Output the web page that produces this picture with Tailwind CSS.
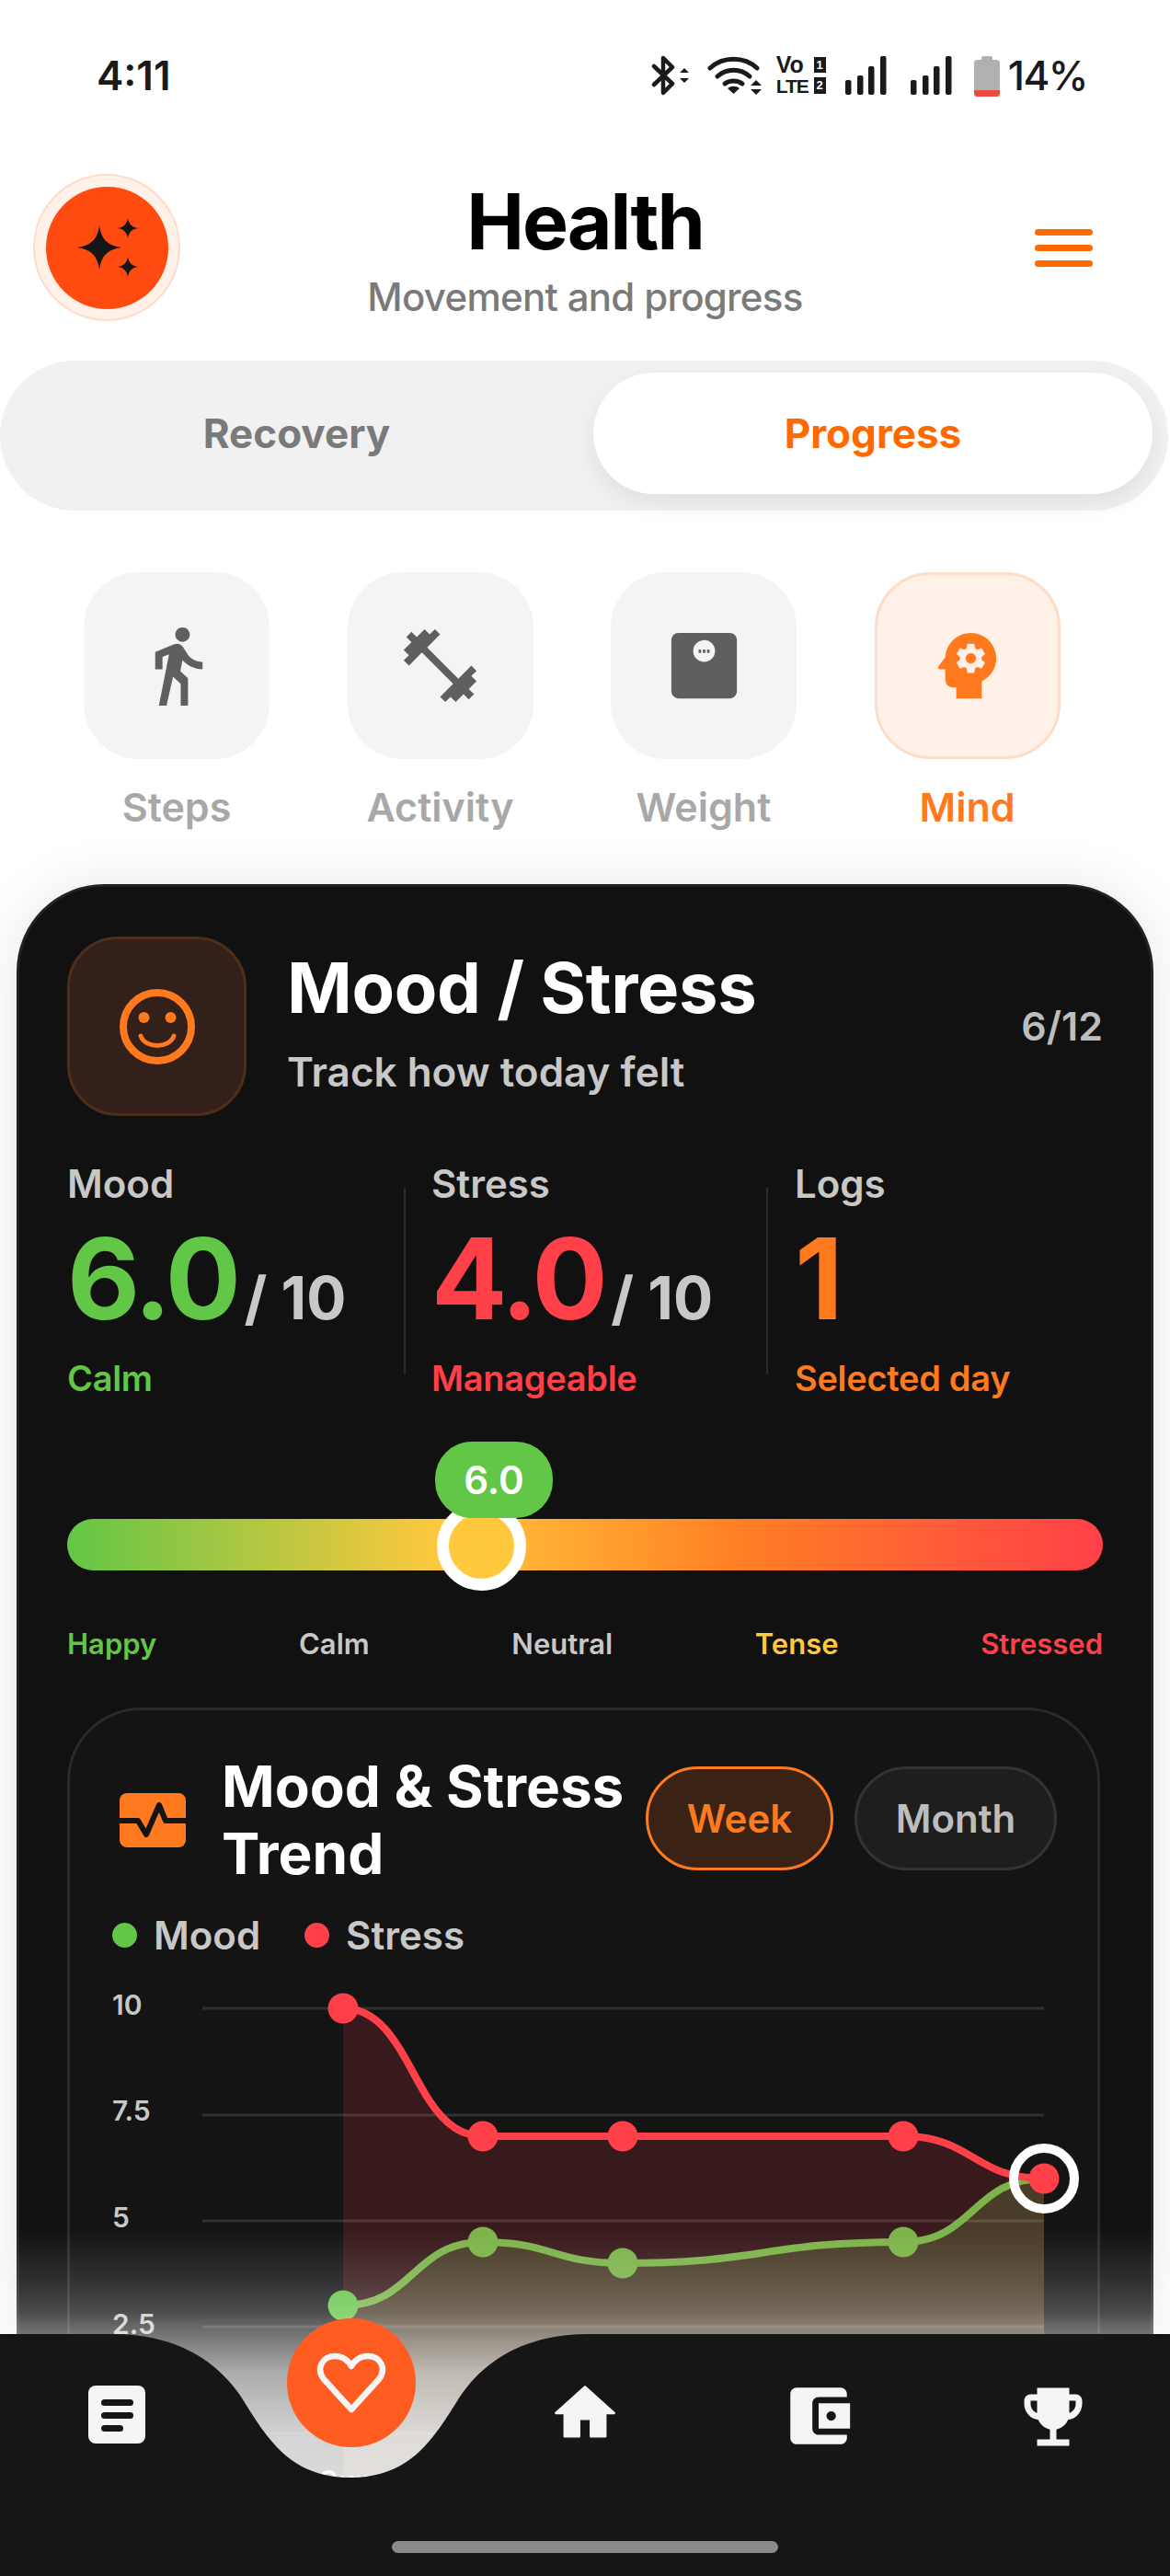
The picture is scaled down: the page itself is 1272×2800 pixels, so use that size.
<!DOCTYPE html>
<html lang="en">
<head>
  <meta charset="UTF-8" />
  <meta name="viewport" content="width=device-width, initial-scale=1.0" />
  <title>Health</title>
  <script src="https://cdn.jsdelivr.net/npm/@tailwindcss/browser@4"></script>
</head>
<body class="bg-white">
  <div class="relative w-[1272px] h-[2800px] overflow-hidden font-['Inter',sans-serif] bg-white">

    <!-- status bar -->
    <div class="flex items-center justify-between h-[90px] mt-[37px] pl-[105px] pr-[90px] text-[#1a1a1a]">
      <span class="text-[44px] font-semibold leading-none">4:11</span>
      <div class="flex items-center">
        <svg width="42" height="44" viewBox="0 0 42 44" fill="none" stroke="#1a1a1a" stroke-width="4.5" stroke-linejoin="round" stroke-linecap="round">
          <path d="M3 12 23 31 13 41V3l10 10L3 32" />
          <path d="M31 19h10l-5-5zM31 25h10l-5 5z" fill="#1a1a1a" stroke="none" />
        </svg>
        <svg class="ml-[19px]" width="60" height="44" viewBox="0 0 60 44" fill="none" stroke="#1a1a1a" stroke-width="5" stroke-linecap="round">
          <path d="M3 14C17 1 40 1 54 14" />
          <path d="M11 23C21 14 36 14 46 23" />
          <path d="M19 31C24 27 33 27 38 31" />
          <path d="M22 36c4-3 9-3 13 0l-6.500 6z" fill="#1a1a1a" stroke="none" />
          <path d="M47 33h12l-6-6zM47 37h12l-6 6z" fill="#1a1a1a" stroke="none" />
        </svg>
        <div class="ml-[15px] w-[54px] h-[42px] font-['Liberation_Sans',sans-serif] font-bold text-[#1a1a1a]">
          <div class="flex justify-between items-center h-[18px]">
            <span class="text-[25px] leading-none">Vo</span>
            <span class="w-[13px] h-[17px] bg-[#1a1a1a] text-white text-[13px] leading-[17px] text-center">1</span>
          </div>
          <div class="flex justify-between items-center h-[18px] mt-[5px]">
            <span class="text-[21px] leading-none tracking-[-1px]">LTE</span>
            <span class="w-[13px] h-[18px] bg-[#1a1a1a] text-white text-[13px] leading-[18px] text-center">2</span>
          </div>
        </div>
        <svg class="ml-[21px]" width="45" height="42" viewBox="0 0 45 42" fill="#1a1a1a">
          <rect x="0" y="26" width="6.500" height="16" rx="2" />
          <rect x="13" y="21" width="6.500" height="21" rx="2" />
          <rect x="25" y="11" width="6.500" height="31" rx="2" />
          <rect x="38" y="0" width="6.500" height="42" rx="2" />
        </svg>
        <svg class="ml-[26px]" width="45" height="42" viewBox="0 0 45 42" fill="#1a1a1a">
          <rect x="0" y="26" width="6.500" height="16" rx="2" />
          <rect x="13" y="21" width="6.500" height="21" rx="2" />
          <rect x="25" y="11" width="6.500" height="31" rx="2" />
          <rect x="38" y="0" width="6.500" height="42" rx="2" />
        </svg>
        <svg class="ml-[24px]" width="28" height="45" viewBox="0 0 28 45">
          <path d="M8 5V3a2 2 0 0 1 2-2h8a2 2 0 0 1 2 2v2h4a4 4 0 0 1 4 4v32a4 4 0 0 1-4 4H4a4 4 0 0 1-4-4V9a4 4 0 0 1 4-4z" fill="#b0b0b0" />
          <path d="M0 38h28v3a4 4 0 0 1-4 4H4a4 4 0 0 1-4-4z" fill="#e84b3c" />
        </svg>
        <span class="ml-[9px] text-[44px] font-medium leading-none tracking-[-1.500px]">14%</span>
      </div>
    </div>

    <!-- header -->
    <div class="grid grid-cols-[160px_1fr_160px] items-center px-[36px] mt-[62px] h-[160px]">
      <div class="w-[160px] h-[160px] rounded-full bg-[#fff0e8] border-[2px] border-[#fddcc8] flex items-center justify-center">
        <div class="w-[133px] h-[133px] rounded-full bg-[#ff4a10] flex items-center justify-center">
          <svg width="80" height="80" viewBox="0 0 80 80" fill="#161616">
            <path d="M32 16C34 31 41 38 56 40 41 42 34 49 32 64 30 49 23 42 8 40 23 38 30 31 32 16z" />
            <path d="M63 8C64 14 67 18 74 19 67 20 64 24 63 30 62 24 59 20 52 19 59 18 62 14 63 8z" />
            <path d="M63 50C64 56 67 60 74 61 67 62 64 66 63 72 62 66 59 62 52 61 59 60 62 56 63 50z" />
          </svg>
        </div>
      </div>
      <div class="text-center mt-[5px]">
        <h1 class="text-[84px] font-bold leading-[90px] tracking-[-2px] text-black">Health</h1>
        <p class="text-[42px] font-medium leading-[50px] tracking-[-0.7px] text-[#7a7a7a] mt-[12px]">Movement and progress</p>
      </div>
      <div class="flex flex-col gap-[10px] w-[63px] justify-self-center">
        <span class="h-[7px] rounded-full bg-[#ff6a00]"></span>
        <span class="h-[7px] rounded-full bg-[#ff6a00]"></span>
        <span class="h-[7px] rounded-full bg-[#ff6a00]"></span>
      </div>
    </div>

    <!-- tabs -->
    <div class="flex items-start w-[1270px] h-[163px] mt-[43px] pt-[13px] rounded-full bg-[#f1f1f1]">
      <div class="flex-1 h-[132px] flex items-center justify-center text-[44px] font-bold text-[#7a7a7a]">Recovery</div>
      <div class="w-[608px] h-[132px] mr-[17px] rounded-full bg-white flex items-center justify-center text-[44px] font-bold text-[#ff6a00] shadow-[0_10px_26px_rgba(0,0,0,0.07)]">Progress</div>
    </div>

    <!-- categories -->
    <div class="flex gap-[84.500px] ml-[91px] mt-[67px]">
      <div class="w-[202px] flex flex-col items-center">
        <div class="w-[202px] h-[203px] rounded-[60px] bg-[#f4f4f4] flex items-center justify-center">
          <svg width="95" height="95" viewBox="0 0 24 24" fill="#5f5f5f"><path d="M13.5 5.500c1.100 0 2-.9 2-2s-.9-2-2-2-2 .9-2 2 .9 2 2 2zM9.800 8.900L7 23h2.100l1.800-8 2.100 2v6h2v-7.500l-2.100-2 .6-3C14.800 12 16.800 13 19 13v-2c-1.900 0-3.500-1-4.300-2.400l-1-1.600c-.4-.6-1-1-1.700-1-.3 0-.5.1-.8.1L6 8.300V13h2V9.600l1.800-.7" /></svg>
        </div>
        <span class="mt-[30px] text-[43px] leading-[44px] font-semibold text-[#a8a8a8]">Steps</span>
      </div>
      <div class="w-[202px] flex flex-col items-center">
        <div class="w-[202px] h-[203px] rounded-[60px] bg-[#f4f4f4] flex items-center justify-center">
          <svg width="95" height="95" viewBox="0 0 24 24" fill="#5f5f5f"><path d="M20.570 14.860L22 13.430 20.570 12 17 15.570 8.430 7 12 3.430 10.570 2 9.140 3.430 7.710 2 5.570 4.140 4.140 2.710 2.710 4.140l1.430 1.430L2 7.710l1.430 1.430L2 10.570 3.430 12 7 8.430 15.570 17 12 20.570 13.430 22l1.430-1.430L16.290 22l2.140-2.140 1.430 1.430 1.430-1.430-1.430-1.430L22 16.290z" /></svg>
        </div>
        <span class="mt-[30px] text-[43px] leading-[44px] font-semibold text-[#a8a8a8]">Activity</span>
      </div>
      <div class="w-[202px] flex flex-col items-center">
        <div class="w-[202px] h-[203px] rounded-[60px] bg-[#f4f4f4] flex items-center justify-center">
          <svg width="95" height="95" viewBox="0 0 24 24" fill="#5f5f5f">
            <path d="M19 3H5c-1.100 0-2 .9-2 2v14c0 1.100.9 2 2 2h14c1.100 0 2-.9 2-2V5c0-1.100-.9-2-2-2z" />
            <circle cx="12" cy="8" r="3" fill="#f4f4f4" />
            <rect x="10.500" y="7.600" width="0.700" height="0.900" /><rect x="11.650" y="7.600" width="0.700" height="0.900" /><rect x="12.800" y="7.600" width="0.700" height="0.900" />
          </svg>
        </div>
        <span class="mt-[30px] text-[43px] leading-[44px] font-semibold text-[#a8a8a8]">Weight</span>
      </div>
      <div class="w-[202px] flex flex-col items-center">
        <div class="w-[202px] h-[203px] rounded-[60px] bg-[#fff0e8] border-[3px] border-[#fddcc8] flex items-center justify-center">
          <svg width="95" height="95" viewBox="0 0 24 24" fill="#ff7a1f"><path d="M13 8.570c-.79 0-1.430.64-1.430 1.430s.64 1.430 1.430 1.430 1.430-.64 1.430-1.430-.64-1.430-1.430-1.430z" /><path d="M13 3C9.250 3 6.200 5.940 6.020 9.640L4.100 12.200c-.25.33 0 .8.4.8H6v3c0 1.100.9 2 2 2h1v3h7v-4.680c2.360-1.120 4-3.530 4-6.320 0-3.870-3.130-7-7-7zm3 7c0 .13-.01.26-.03.39l.83.66c.08.06.1.16.05.25l-.8 1.390c-.05.09-.16.12-.24.09l-.99-.4c-.21.16-.43.29-.67.39L14 13.830c-.01.1-.1.17-.2.17h-1.600c-.1 0-.18-.07-.2-.17l-.15-1.060c-.25-.1-.47-.23-.68-.39l-.99.4c-.09.03-.2 0-.25-.09l-.8-1.390c-.05-.08-.03-.19.05-.25l.84-.66c-.03-.13-.02-.26-.02-.39 0-.13.02-.27.04-.39l-.85-.66c-.08-.06-.1-.16-.05-.26l.8-1.380c.05-.09.15-.12.24-.09l1 .4c.2-.15.43-.29.67-.39L12 6.170c.02-.1.1-.17.2-.17h1.600c.1 0 .18.07.2.17l.15 1.060c.24.1.46.23.67.39l1-.4c.09-.03.2 0 .24.09l.8 1.380c.05.09.03.2-.05.26l-.85.66c.03.12.04.25.04.39z" /></svg>
        </div>
        <span class="mt-[30px] text-[43px] leading-[44px] font-semibold text-[#ff7a1f]">Mind</span>
      </div>
    </div>

    <!-- dark card -->
    <div class="ml-[18px] mt-[62px] w-[1236px] h-[1900px] rounded-t-[95px] bg-[#111111] border-[3px] border-[#222222] pt-[54px] px-[52px] shadow-[0_0_60px_rgba(0,0,0,0.1)]">
      <div class="flex h-[195px]">
        <div class="w-[195px] h-[195px] rounded-[55px] bg-[#33201a] border-[3px] border-[#4e2e18] flex items-center justify-center">
          <svg width="88" height="88" viewBox="0 0 88 88" fill="none" stroke="#ff7a1f" stroke-width="8" stroke-linecap="round">
            <circle cx="44" cy="44" r="37" />
            <path d="M26 54C31 68 57 68 62 54" stroke-width="5" />
            <circle cx="29.500" cy="34" r="6" fill="#ff7a1f" stroke="none" />
            <circle cx="58.500" cy="34" r="6" fill="#ff7a1f" stroke="none" />
          </svg>
        </div>
        <div class="ml-[44px] flex-1 pt-[9px]">
          <h2 class="text-[76px] font-bold leading-[92px] tracking-[-0.3px] text-white">Mood / Stress</h2>
          <p class="mt-[21px] text-[44px] font-semibold leading-[50px] text-[#c8c8c8]">Track how today felt</p>
        </div>
        <span class="self-center text-[43px] font-semibold text-[#bdbdbd]">6/12</span>
      </div>

      <!-- stats -->
      <div class="flex mt-[52px]">
        <div class="w-[366px]">
          <div class="text-[42px] font-semibold leading-[44px] text-[#c8c8c8]">Mood</div>
          <div class="mt-[16px] h-[130px] leading-[130px] whitespace-nowrap">
            <span class="text-[122px] font-bold tracking-[-3px] text-[#62c646]">6.0</span>
            <span class="text-[64px] font-bold text-[#c8c8c8] ml-[2px]">/ 10</span>
          </div>
          <div class="mt-[21px] text-[38px] font-semibold leading-[44px] tracking-[-0.3px] text-[#62c646]">Calm</div>
        </div>
        <span class="w-[2px] h-[203px] self-center bg-[#2a2a2a] mr-[28px]"></span>
        <div class="w-[364px]">
          <div class="text-[42px] font-semibold leading-[44px] text-[#c8c8c8]">Stress</div>
          <div class="mt-[16px] h-[130px] leading-[130px] whitespace-nowrap">
            <span class="text-[122px] font-bold tracking-[-3px] text-[#ff4048]">4.0</span>
            <span class="text-[64px] font-bold text-[#c8c8c8] ml-[2px]">/ 10</span>
          </div>
          <div class="mt-[21px] text-[38px] font-semibold leading-[44px] tracking-[-0.3px] text-[#ff4048]">Manageable</div>
        </div>
        <span class="w-[2px] h-[203px] self-center bg-[#2a2a2a] mr-[29px]"></span>
        <div>
          <div class="text-[42px] font-semibold leading-[44px] text-[#c8c8c8]">Logs</div>
          <div class="mt-[16px] h-[130px] leading-[130px] text-[122px] font-bold text-[#ff7a1f]">1</div>
          <div class="mt-[21px] text-[38px] font-semibold leading-[44px] tracking-[-0.3px] text-[#ff7a1f]">Selected day</div>
        </div>
      </div>

      <!-- gauge -->
      <div class="relative h-[56px] mt-[131px] rounded-full bg-[linear-gradient(90deg,#62c646_0%,#ffc83d_36%,#ff7f24_65%,#ff4048_100%)]">
        <div class="absolute left-[402px] top-[-19px] w-[97px] h-[97px] rounded-full bg-[#ffc83d] border-[13px] border-white"></div>
        <div class="absolute left-[400px] top-[-84px] w-[128px] h-[83px] rounded-[40px] bg-[#62c646] flex items-center justify-center text-[42px] font-semibold text-white">6.0</div>
      </div>
      <div class="flex justify-between mt-[60px] text-[31px] leading-[40px] font-semibold">
        <span class="text-[#62c646]">Happy</span>
        <span class="text-[#c8c8c8]">Calm</span>
        <span class="text-[#c8c8c8]">Neutral</span>
        <span class="text-[#ffc83d]">Tense</span>
        <span class="text-[#ff4048]">Stressed</span>
      </div>

      <!-- trend -->
      <div class="mt-[49px] w-[1123px] h-[1000px] rounded-t-[80px] bg-[#141414] border-[3px] border-[#2a2a2a] pt-[46px]">
        <div class="flex items-start pl-[54px]">
          <svg class="self-center shrink-0" width="72" height="59" viewBox="0 0 72 59">
            <rect width="72" height="59" rx="8" fill="#ff7a1f" />
            <path d="M0 30H20L29 45 43 13 50 30H72" fill="none" stroke="#141414" stroke-width="6" stroke-linejoin="round" />
          </svg>
          <h3 class="ml-[39px] w-[461px] shrink-0 text-[62px] font-bold leading-[73px] text-white">Mood &amp; Stress Trend</h3>
          <div class="flex gap-[23px] mt-[15px]">
            <span class="w-[204px] h-[113px] rounded-full bg-[#3a2315] border-[3px] border-[#ff7a1f] flex items-center justify-center text-[42px] font-semibold text-[#ff7a1f]">Week</span>
            <span class="w-[220px] h-[113px] rounded-full bg-[#1e1e1e] border-[3px] border-[#333333] flex items-center justify-center text-[42px] font-semibold text-[#bdbdbd]">Month</span>
          </div>
        </div>
        <div class="flex items-center pl-[46px] mt-[30px] h-[44px] text-[42px] font-semibold text-[#c8c8c8]">
          <span class="w-[27px] h-[27px] rounded-full bg-[#62c646]"></span>
          <span class="ml-[18px]">Mood</span>
          <span class="ml-[48px] w-[27px] h-[27px] rounded-full bg-[#ff4048]"></span>
          <span class="ml-[18px]">Stress</span>
        </div>
        <svg class="block mt-[25px]" width="1117" height="650" viewBox="76 2150 1117 650">
          <path d="M373 2183C449 2183 449 2322 525 2322H982C1058 2322 1058 2368 1135 2368V2800H373Z" fill="#ff4048" fill-opacity="0.16" />
          <path d="M373 2506C449 2506 449 2437 525 2437 601 2437 601 2460 677 2460 830 2460 830 2437 982 2437 1058 2437 1058 2368 1135 2368V2800H373Z" fill="#8cc85a" fill-opacity="0.2" />
          <g fill="none" stroke="#ffffff" stroke-opacity="0.12" stroke-width="3">
            <path d="M220 2183H1135" /><path d="M220 2299H1135" /><path d="M220 2414H1135" /><path d="M220 2529H1135" /><path d="M220 2645H1135" />
          </g>
          <g font-size="30" font-weight="600" fill="#c8c8c8">
            <text x="122" y="2190">10</text><text x="122" y="2305">7.5</text><text x="122" y="2421">5</text><text x="122" y="2537">2.5</text>
          </g>
          <text x="347" y="2708" font-size="31" font-weight="600" fill="#e8e8e8">Sun</text>
          <path d="M373 2506C449 2506 449 2437 525 2437 601 2437 601 2460 677 2460 830 2460 830 2437 982 2437 1058 2437 1058 2368 1135 2368" fill="none" stroke="#7cb34a" stroke-width="8" />
          <path d="M373 2183C449 2183 449 2322 525 2322H982C1058 2322 1058 2368 1135 2368" fill="none" stroke="#ff4048" stroke-width="8" />
          <g fill="#7cb34a"><circle cx="525" cy="2437" r="16.500" /><circle cx="677" cy="2460" r="16.500" /><circle cx="982" cy="2437" r="16.500" /></g>
          <circle cx="373" cy="2506" r="16.500" fill="#62c646" />
          <g fill="#ff4048"><circle cx="373" cy="2183" r="16.500" /><circle cx="525" cy="2322" r="16.500" /><circle cx="677" cy="2322" r="16.500" /><circle cx="982" cy="2322" r="16.500" /></g>
          <circle cx="1135" cy="2368" r="33" fill="none" stroke="#ffffff" stroke-width="10" />
          <circle cx="1135" cy="2368" r="16.500" fill="#ff4048" />
        </svg>
      </div>
    </div>

    <!-- fade above the nav -->
    <div class="absolute left-0 top-[2420px] w-full h-[290px] bg-[linear-gradient(rgba(255,255,255,0)_0px,rgba(255,255,255,0.05)_27px,rgba(255,255,255,0.13)_60px,rgba(255,255,255,0.24)_93px,rgba(255,255,255,0.37)_110px,rgba(255,255,255,0.65)_160px,rgba(255,255,255,0.82)_230px,rgba(255,255,255,0.85)_290px)]"></div>

    <!-- bottom nav -->
    <div class="absolute left-0 bottom-0 w-full h-[263px]">
      <svg class="absolute left-0 top-0" width="1272" height="263" viewBox="0 0 1272 263" fill="#161616">
        <path d="M0 0H122C190 0 235 28 262 68 290 113 315 156 381 156 447 156 472 113 500 68 527 28 572 0 640 0H1272V263H0Z" />
      </svg>
      <div class="relative grid grid-cols-5 pt-[48px]">
        <div class="flex justify-center pt-[8px]">
          <svg width="62" height="63" viewBox="0 0 62 63">
            <rect width="62" height="63" rx="8" fill="#f5f5f5" />
            <rect x="14" y="15" width="35" height="7" rx="3.500" fill="#161616" />
            <rect x="14" y="29" width="35" height="7" rx="3.500" fill="#161616" />
            <rect x="14" y="43" width="24" height="7" rx="3.500" fill="#161616" />
          </svg>
        </div>
        <div class="flex justify-center">
          <div class="w-[140px] h-[140px] mt-[-65px] rounded-full bg-[#ff5c22] flex items-center justify-center">
            <svg width="76" height="68" viewBox="0 0 76 68" fill="none" stroke="#f5f5f5" stroke-width="6.500" stroke-linejoin="round">
              <path d="M38 63 8 30C-1 18 7 5 20 5c8 0 14 4 18 11C42 9 48 5 56 5c13 0 21 13 12 25z" />
            </svg>
          </div>
        </div>
        <div class="flex justify-center">
          <svg width="76" height="76" viewBox="0 0 24 24" fill="#f5f5f5" stroke="#f5f5f5" stroke-width="0.8" stroke-linejoin="round"><path d="M10 20v-6h4v6h5v-8h3L12 3 2 12h3v8z" /></svg>
        </div>
        <div class="flex justify-center">
          <svg width="82" height="82" viewBox="0 0 24 24" fill="#f5f5f5"><path d="M21 18v1c0 1.100-.89 2-2 2H5c-1.110 0-2-.9-2-2V5c0-1.100.89-2 2-2h14c1.110 0 2 .9 2 2v1h-9c-1.110 0-2 .9-2 2v8c0 1.100.89 2 2 2h9zm-9-2h10V8H12v8zm4-2.500c-.83 0-1.500-.67-1.500-1.500s.67-1.500 1.500-1.500 1.500.67 1.500 1.500-.67 1.500-1.500 1.500z" /></svg>
        </div>
        <div class="flex justify-center">
          <svg width="84" height="84" viewBox="0 0 24 24" fill="#f5f5f5"><path d="M19 5h-2V3H7v2H5c-1.100 0-2 .9-2 2v1c0 2.550 1.920 4.630 4.390 4.940.63 1.500 1.980 2.630 3.610 2.960V19H7v2h10v-2h-4v-3.100c1.630-.33 2.980-1.460 3.610-2.960C19.080 12.630 21 10.550 21 8V7c0-1.100-.9-2-2-2zM5 8V7h2v3.820C5.840 10.400 5 9.300 5 8zm14 0c0 1.300-.84 2.400-2 2.820V7h2v1z" /></svg>
        </div>
      </div>
      <div class="absolute left-[426px] top-[225px] w-[420px] h-[13px] rounded-full bg-[#8a8a8a]"></div>
    </div>
  </div>
</body>
</html>
